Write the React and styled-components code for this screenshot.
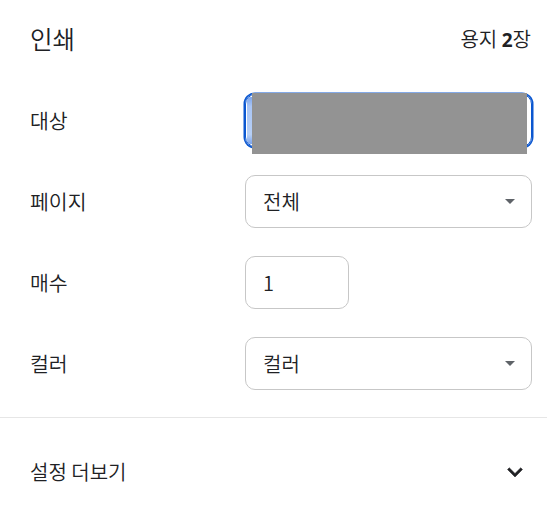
import React from "react";
import styled, { createGlobalStyle } from "styled-components";

const Global = createGlobalStyle`
  html, body { margin: 0; padding: 0; background: #ffffff; }
  body {
    font-family: "Noto Sans CJK KR", "Noto Sans", sans-serif;
    color: #202124;
  }
`;

const Panel = styled.div`
  width: 547px;
  height: 527px;
  overflow: hidden;
  background: #fff;
  display: flex;
  flex-direction: column;
`;

const Header = styled.header`
  height: 78px;
  padding: 0 16px 0 30px;
  display: flex;
  align-items: center;
  justify-content: space-between;
`;

const Title = styled.h1`
  margin: 0;
  font-size: 24.5px;
  font-weight: 350;
  line-height: 1;
`;

const Summary = styled.div`
  font-size: 20px;
  font-weight: 350;
  line-height: 1;
  b { font-weight: 700; font-family: "Noto Sans", sans-serif; font-size: 19px; }
`;

const Settings = styled.div`
  padding: 16px 15px 0 30px;
  display: flex;
  flex-direction: column;
  gap: 28px;
`;

const Row = styled.div`
  display: flex;
  align-items: center;
  height: 53px;
`;

const Label = styled.div`
  width: 215px;
  flex: none;
  font-size: 20.5px;
  font-weight: 350;
  line-height: 1;
`;

const Field = styled.div`
  position: relative;
  box-sizing: border-box;
  width: ${(p) => p.$w}px;
  height: 53px;
  border: 1px solid ${(p) => (p.$focused ? "#0b57d0" : "#c7c7c7")};
  box-shadow: ${(p) => (p.$focused ? "0 0 0 1.5px #0b57d0" : "none")};
  border-radius: 10px;
  display: flex;
  align-items: center;
  padding: 0 16px 0 17px;
  font-size: 20px;
  font-weight: 350;
  line-height: 1;
`;

const Value = styled.span`
  flex: 1;
`;

const Caret = styled.span`
  width: 0;
  height: 0;
  border-left: 5px solid transparent;
  border-right: 5px solid transparent;
  border-top: 5px solid #5f6368;
`;

const Selection = styled.span`
  position: absolute;
  left: 1px;
  top: 2px;
  bottom: 2px;
  width: 7px;
  background: linear-gradient(#7ba4ec, #a9c5f5 20%, #b6cff6 80%, #7ba4ec);
  border-radius: 4px 0 0 4px;
`;

const Redaction = styled.span`
  position: absolute;
  left: 6px;
  top: -2px;
  width: 275px;
  height: 61px;
  background: #939393;
`;

const Divider = styled.hr`
  margin: 27px 0 0;
  border: none;
  border-top: 1px solid #e6e6e6;
  height: 0;
`;

const More = styled.div`
  height: 108px;
  padding: 0 17px 0 30px;
  display: flex;
  align-items: center;
  justify-content: space-between;
  font-size: 20px;
  font-weight: 350;
  line-height: 1;
`;

const Chevron = () => (
  <svg width="30" height="30" viewBox="0 0 24 24">
    <path d="M16.59 8.59L12 13.17 7.41 8.59 6 10l6 6 6-6z" fill="#202124" stroke="#202124" strokeWidth="0.4" />
  </svg>
);

export default function App() {
  return (
    <>
      <Global />
      <Panel>
        <Header>
          <Title>인쇄</Title>
          <Summary>
            용지 <b>2</b>장
          </Summary>
        </Header>
        <Settings>
          <Row>
            <Label>대상</Label>
            <Field $w={288} $focused>
              <Selection />
              <Redaction />
            </Field>
          </Row>
          <Row>
            <Label>페이지</Label>
            <Field $w={287}>
              <Value>전체</Value>
              <Caret />
            </Field>
          </Row>
          <Row>
            <Label>매수</Label>
            <Field $w={104}>
              <Value>1</Value>
            </Field>
          </Row>
          <Row>
            <Label>컬러</Label>
            <Field $w={287}>
              <Value>컬러</Value>
              <Caret />
            </Field>
          </Row>
        </Settings>
        <Divider />
        <More>
          <span>설정 더보기</span>
          <Chevron />
        </More>
      </Panel>
    </>
  );
}
